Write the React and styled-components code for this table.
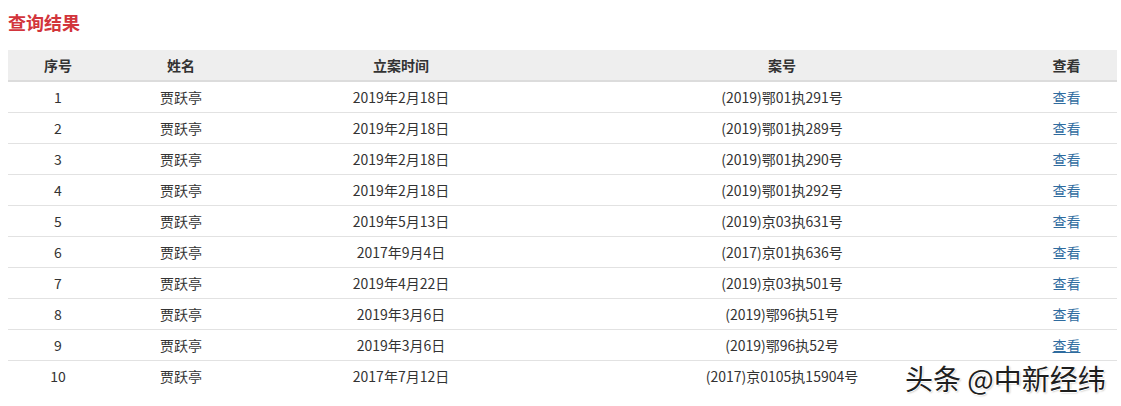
import React from 'react';
import styled, { createGlobalStyle } from 'styled-components';

const rows = [
  ['1', '贾跃亭', '2019年2月18日', '(2019)鄂01执291号'],
  ['2', '贾跃亭', '2019年2月18日', '(2019)鄂01执289号'],
  ['3', '贾跃亭', '2019年2月18日', '(2019)鄂01执290号'],
  ['4', '贾跃亭', '2019年2月18日', '(2019)鄂01执292号'],
  ['5', '贾跃亭', '2019年5月13日', '(2019)京03执631号'],
  ['6', '贾跃亭', '2017年9月4日', '(2017)京01执636号'],
  ['7', '贾跃亭', '2019年4月22日', '(2019)京03执501号'],
  ['8', '贾跃亭', '2019年3月6日', '(2019)鄂96执51号'],
  ['9', '贾跃亭', '2019年3月6日', '(2019)鄂96执52号'],
  ['10', '贾跃亭', '2017年7月12日', '(2017)京0105执15904号'],
];

const App = () => {
  return (
    <Page>
      <GlobalStyle />
      <Title>查询结果</Title>
      <Table>
        <colgroup>
          <col style={{ width: 100 }} />
          <col style={{ width: 146 }} />
          <col style={{ width: 294 }} />
          <col style={{ width: 468 }} />
          <col style={{ width: 101 }} />
        </colgroup>
        <thead>
          <tr>
            <Th>序号</Th>
            <Th>姓名</Th>
            <Th>立案时间</Th>
            <Th>案号</Th>
            <Th>查看</Th>
          </tr>
        </thead>
        <tbody>
          {rows.map((r, i) => {
            const last = i === rows.length - 1;
            return (
              <Tr key={r[0]} $last={last}>
                <Td>{r[0]}</Td>
                <Td>{r[1]}</Td>
                <Td>{r[2]}</Td>
                <Td>{r[3]}</Td>
                {/* last row's link sits under the watermark */}
                <Td>{!last && <ViewLink href="#" $hover={i === 8}>查看</ViewLink>}</Td>
              </Tr>
            );
          })}
        </tbody>
      </Table>
      <Watermark>头条 @中新经纬</Watermark>
    </Page>
  );
};

export default App;

const GlobalStyle = createGlobalStyle`
  body {
    margin: 0;
    background: #fff;
    font-family: "Noto Sans CJK SC", "Noto Sans", sans-serif;
  }
`;

const Page = styled.div`
  position: relative;
  width: 1121px;
  height: 406px;
  padding: 10px 4px 0 8px;
  box-sizing: border-box;
  overflow: hidden;
`;

const Title = styled.h3`
  margin: 0;
  height: 26px;
  line-height: 24px;
  font-size: 18px;
  font-weight: bold;
  color: #d2353c;
`;

const Table = styled.table`
  margin-top: 14px;
  width: 1109px;
  border-collapse: collapse;
  table-layout: fixed;
  font-size: 14px;
  color: #333;
`;

const Th = styled.th`
  height: 30px;
  padding: 0;
  background: #eeeeee;
  border-bottom: 2px solid #dcdcdc;
  font-weight: bold;
  text-align: center;
  color: #333;
`;

const Tr = styled.tr`
  border-bottom: ${p => (p.$last ? 'none' : '1px solid #e2e2e2')};
`;

const Td = styled.td`
  height: 30px;
  padding: 0;
  text-align: center;
`;

const ViewLink = styled.a`
  color: #2f6c9f;
  text-decoration: ${p => (p.$hover ? 'underline' : 'none')};
`;

const Watermark = styled.div`
  position: absolute;
  left: 905px;
  top: 360px;
  font-size: 28px;
  line-height: 36px;
  font-weight: 400;
  color: #1e1e1e;
  white-space: nowrap;
  text-shadow: -1px 0 #fff, 1px 0 #fff, 0 -1px #fff, 0 1px #fff, 1px 1px 2px rgba(0,0,0,0.3);
`;
